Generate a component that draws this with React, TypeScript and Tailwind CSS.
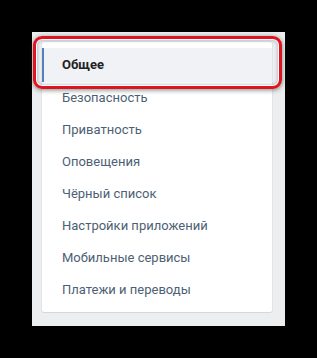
import React from 'react';

const items = [
  'Безопасность',
  'Приватность',
  'Оповещения',
  'Чёрный список',
  'Настройки приложений',
  'Мобильные сервисы',
  'Платежи и переводы',
];

export default function App() {
  return (
    <div
      className="w-[317px] h-[358px] bg-black pt-[32px] pl-[32px]"
      style={{ fontFamily: 'Roboto, "Open Sans", Arial, sans-serif' }}
    >
      <div className="relative w-[253px] h-[294px] bg-[#edeef0] pl-[10px] pt-[10px]">
        <div className="w-[230px] h-[270px] bg-white rounded-[2px] shadow-[0_1px_0_0_#d7d8db,0_0_0_1px_#e3e4e8] pt-[6px] pb-[6px]">
          <div className="h-[34px] flex items-center bg-[#f0f2f5] border-l-2 border-[#5181b8] pl-[18px] text-[13px] font-bold text-[#222]">
            Общее
          </div>
          {items.map((label) => (
            <div key={label} className="h-[32px] flex items-center pl-[20px] text-[13px] text-[#4d5f74]">
              {label}
            </div>
          ))}
        </div>

        <div className="absolute left-[1px] top-[4px] w-[249px] h-[53px] rounded-[9px] border-[3px] border-[#e0141e] shadow-[0_1px_5px_rgba(30,60,50,0.6),inset_0_0_0_1px_#fff,inset_0_0_3px_2px_rgba(120,130,150,0.4)]" />
      </div>
    </div>
  );
}
